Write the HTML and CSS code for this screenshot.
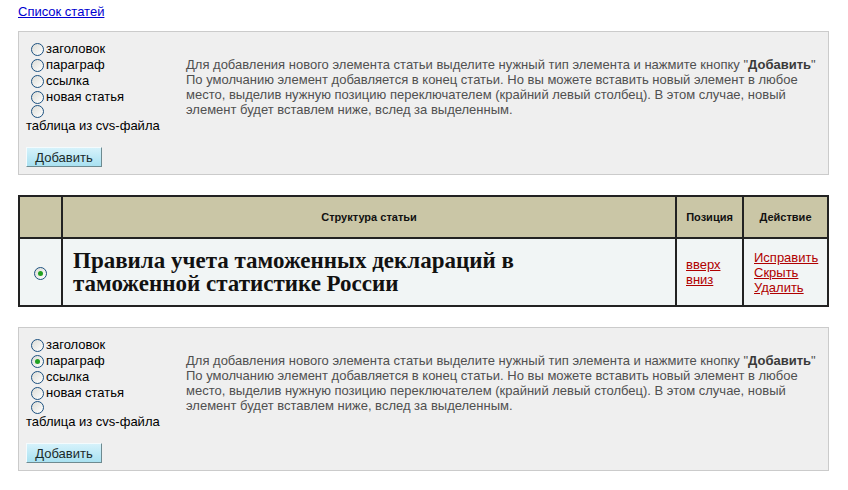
FILE: index.html
```html
<!DOCTYPE html>
<html lang="ru">
<head>
    <meta charset="UTF-8">
    <title>Структура статьи</title>
    <link rel="stylesheet" href="styles.css">
</head>
<body>

<div class="page">
    <a href="#" class="back-link">Список статей</a>

    <!-- Add element form (top) -->
    <form class="add-box">
        <div class="add-row">
            <div class="types">
                <label class="type"><input type="radio" name="type1" value="header">заголовок</label>
                <label class="type"><input type="radio" name="type1" value="para">параграф</label>
                <label class="type"><input type="radio" name="type1" value="link">ссылка</label>
                <label class="type"><input type="radio" name="type1" value="article">новая статья</label>
                <label class="type type-wrap"><input type="radio" name="type1" value="csv"><span>таблица из cvs-файла</span></label>
            </div>
            <div class="hint">
                Для добавления нового элемента статьи выделите нужный тип элемента и нажмите кнопку "<b>Добавить</b>"<br>
                По умолчанию элемент добавляется в конец статьи. Но вы можете вставить новый элемент в любое
                место, выделив нужную позицию переключателем (крайний левый столбец). В этом случае, новый
                элемент будет вставлем ниже, вслед за выделенным.
            </div>
        </div>
        <button type="button" class="add-button">Добавить</button>
    </form>

    <!-- Article structure -->
    <table class="structure">
        <tr>
            <th class="col-select"></th>
            <th>Структура статьи</th>
            <th class="col-pos">Позиция</th>
            <th class="col-action">Действие</th>
        </tr>
        <tr>
            <td class="col-select"><input type="radio" name="pos" checked></td>
            <td><h1 class="article-title">Правила учета таможенных деклараций в таможенной статистике России</h1></td>
            <td class="col-pos">
                <a href="#">вверх</a><br>
                <a href="#">вниз</a>
            </td>
            <td class="col-action">
                <a href="#">Исправить</a><br>
                <a href="#">Скрыть</a><br>
                <a href="#">Удалить</a>
            </td>
        </tr>
    </table>

    <!-- Add element form (bottom) -->
    <form class="add-box">
        <div class="add-row">
            <div class="types">
                <label class="type"><input type="radio" name="type2" value="header">заголовок</label>
                <label class="type"><input type="radio" name="type2" value="para" checked>параграф</label>
                <label class="type"><input type="radio" name="type2" value="link">ссылка</label>
                <label class="type"><input type="radio" name="type2" value="article">новая статья</label>
                <label class="type type-wrap"><input type="radio" name="type2" value="csv"><span>таблица из cvs-файла</span></label>
            </div>
            <div class="hint">
                Для добавления нового элемента статьи выделите нужный тип элемента и нажмите кнопку "<b>Добавить</b>"<br>
                По умолчанию элемент добавляется в конец статьи. Но вы можете вставить новый элемент в любое
                место, выделив нужную позицию переключателем (крайний левый столбец). В этом случае, новый
                элемент будет вставлем ниже, вслед за выделенным.
            </div>
        </div>
        <button type="button" class="add-button">Добавить</button>
    </form>
</div>

</body>
</html>
```

FILE: styles.css
```css
body {
    margin: 0;
    padding: 0;
    background-color: #fff;
    font-family: "Liberation Sans", Arial, sans-serif;
    font-size: 13px;
    color: #000;
}
.page {
    padding: 4px 19px 0 18px;
}
.back-link {
    display: inline-block;
    color: #0000d0;
    line-height: 15px;
}

/* Add element box */
.add-box {
    margin: 12px 0 20px;
    padding: 9px 7px 7px;
    background-color: #efefef;
    border: 1px solid #cbcbcb;
}
.add-row {
    display: flex;
}
.types {
    width: 160px;
    flex-shrink: 0;
}
.type {
    display: flex;
    align-items: center;
    height: 16px;
    line-height: 16px;
}
.type-wrap {
    flex-direction: column;
    align-items: flex-start;
    height: 32px;
    line-height: 15px;
}
.type-wrap input {
    margin-top: 3px;
    margin-bottom: 1px;
}
.hint {
    margin-top: 16px;
    color: #505050;
    line-height: 15px;
}
.hint b {
    color: #3a3a3a;
}

/* Radio buttons */
input[type="radio"] {
    appearance: none;
    -webkit-appearance: none;
    width: 13px;
    height: 13px;
    margin: 0 2px 0 5px;
    border: 1px solid #1c5180;
    border-radius: 50%;
    background: linear-gradient(135deg, #dcdcd6, #fff);
    position: relative;
    flex-shrink: 0;
}
input[type="radio"]:checked::after {
    content: "";
    position: absolute;
    left: 3px;
    top: 3px;
    width: 5px;
    height: 5px;
    border-radius: 50%;
    background-color: #21a121;
}

.add-button {
    display: block;
    margin-top: 10px;
    width: 76px;
    height: 20px;
    padding: 0;
    font-family: "Liberation Sans", Arial, sans-serif;
    font-size: 13px;
    color: #1a2a2a;
    background: linear-gradient(#d6f2fb, #a9e1f1);
    border: 1px solid;
    border-color: #f4fbfd #6e8a90 #6e8a90 #f4fbfd;
}

/* Structure table */
.structure {
    width: 100%;
    table-layout: fixed;
    border-collapse: collapse;
    border: 2px solid #222;
    margin-bottom: 20px;
}
.structure th,
.structure td {
    border: 2px solid #222;
    padding: 0;
}
.structure th {
    height: 40px;
    background-color: #cac6a6;
    font-size: 11px;
    font-weight: bold;
    color: #111;
}
.structure td {
    height: 66px;
    background-color: #f1f5f5;
    vertical-align: middle;
}
.col-select {
    width: 41px;
    text-align: center;
}
.col-select input[type="radio"] {
    margin: 0;
    vertical-align: middle;
}
.col-pos {
    width: 65px;
}
.col-action {
    width: 83px;
}
td.col-pos {
    padding-left: 9px;
    line-height: 15px;
}
td.col-action {
    padding-left: 10px;
    line-height: 15px;
}
.structure a {
    color: #b00000;
}
.article-title {
    margin: 0 0 0 10px;
    max-width: 500px;
    font-family: "Liberation Serif", "Times New Roman", serif;
    font-size: 23px;
    line-height: 23px;
    color: #111;
}
```
